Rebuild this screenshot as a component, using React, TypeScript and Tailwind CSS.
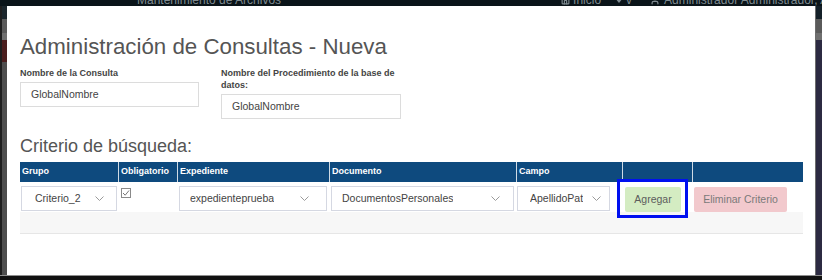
import { Home, User } from 'lucide-react';

const font = "font-['Liberation_Sans',Arial,Helvetica,sans-serif]";

function Chevron() {
  return (
    <svg width="9" height="5" viewBox="0 0 9 5" className="shrink-0">
      <path d="M0.5 0.5 L4.5 4.5 L8.5 0.5" fill="none" stroke="#9a9a9a" strokeWidth="1" />
    </svg>
  );
}

function Select({ value, width, pl, pr }: { value: string; width: string; pl: string; pr: string }) {
  return (
    <div className={`${width} ${pl} ${pr} h-[25px] border border-[#d5d8e2] bg-white flex items-center justify-between`}>
      <span className="text-[10.5px] text-[#444] whitespace-nowrap overflow-hidden">{value}</span>
      <Chevron />
    </div>
  );
}

// strip of the page behind the modal, only the lower edge of its text shows
function TopBar() {
  return (
    <div className="h-[6px] flex items-start overflow-hidden text-[12px] leading-[14px] text-[#7f8a90]">
      <span className="ml-[137px] mt-[-7px] whitespace-nowrap">Mantenimiento de Archivos</span>
      <span className="ml-[280px] mt-[-7px] flex items-center gap-[3px] whitespace-nowrap">
        <Home size={9} strokeWidth={3} /> Inicio
      </span>
      <span className="ml-[14px] mt-[-7px] flex items-center gap-[3px] whitespace-nowrap">
        <svg width="8" height="8" viewBox="0 0 8 8"><path d="M0 2 H8 L4 7 Z" fill="#7f8a90" /></svg> v
      </span>
      <span className="ml-[18px] mt-[-7px] flex items-center gap-[4px] whitespace-nowrap">
        <User size={10} strokeWidth={3} /> Administrador Administrador, Administrador
      </span>
    </div>
  );
}

function LeftStrip() {
  return (
    <div className="w-[7px] flex flex-col border-l-2 border-[#1e1e1e]">
      <div className="h-[13px] bg-[#1b262c]" />
      <div className="h-[14px] bg-[#5a5a5a]" />
      <div className="h-[7px] bg-[#6f6f6f]" />
      <div className="h-[22px] bg-[#4b1e1e]" />
      <div className="flex-1 bg-[#4e4e4e]" />
    </div>
  );
}

function RightStrip() {
  return (
    <div className="w-[7px] flex flex-col border-l border-[#6c6c6c]">
      <div className="h-[13px] bg-[#142028]" />
      <div className="h-[14px] bg-[#5a5a5a]" />
      <div className="h-[7px] bg-[#6f6f6f]" />
      <div className="flex-1 bg-[#2c2a42]" />
    </div>
  );
}

export default function App() {
  const headers = ['Grupo', 'Obligatorio', 'Expediente', 'Documento', 'Campo', '', ''];
  return (
    <div className={`w-[822px] h-[280px] bg-[#0a1419] flex flex-col overflow-hidden ${font}`}>
      <TopBar />
      <div className="flex h-[269px]">
        <LeftStrip />
        <main className="w-[808px] bg-white pl-[13px] pr-[12px] pt-[28px]">
          <h1 className="text-[22.3px] leading-[26px] text-[#555]">Administración de Consultas - Nueva</h1>

          <div className="mt-[7px] flex gap-[22px] items-start">
            <div className="w-[179px]">
              <label className="block text-[9px] leading-[12px] font-bold text-[#444]">Nombre de la Consulta</label>
              <div className="mt-[3px] h-[25px] border border-[#dcdcdc] pl-[10px] flex items-center text-[10.5px] text-[#444]">
                GlobalNombre
              </div>
            </div>
            <div className="w-[180px]">
              <label className="block text-[9px] leading-[12px] font-bold text-[#444]">
                Nombre del Procedimiento de la base de datos:
              </label>
              <div className="mt-[3px] h-[25px] border border-[#dcdcdc] pl-[10px] flex items-center text-[10.5px] text-[#444]">
                GlobalNombre
              </div>
            </div>
          </div>

          <h2 className="mt-[16px] text-[18px] leading-[22px] text-[#555]">Criterio de búsqueda:</h2>

          <div className="mt-[5px] w-[783px]">
            <div className="grid grid-cols-[98px_59px_152px_187px_106px_70px_111px] h-[20px] bg-[#0e4a7e]">
              {headers.map((h, i) => (
                <div
                  key={i}
                  className={`pl-[2px] flex items-center text-[9px] font-bold text-white ${i > 0 ? 'border-l border-white/80' : ''}`}
                >
                  {h}
                </div>
              ))}
            </div>

            <div className="grid grid-cols-[98px_59px_152px_187px_106px_70px_111px] h-[30px] bg-white pt-[4px]">
              <div className="pl-[1px]">
                <Select value="Criterio_2" width="w-[96px]" pl="pl-[13px]" pr="pr-[12px]" />
              </div>
              <div className="pl-[3px] pt-[2px]">
                <div className="w-[10px] h-[10px] border border-[#8a8a8a] bg-white flex items-center justify-center">
                  <svg width="8" height="8" viewBox="0 0 8 8">
                    <path d="M1 4 L3.2 6.2 L7 1.5" fill="none" stroke="#777" strokeWidth="1" />
                  </svg>
                </div>
              </div>
              <div className="pl-[2px]">
                <Select value="expedienteprueba" width="w-[148px]" pl="pl-[10px]" pr="pr-[17px]" />
              </div>
              <div className="pl-[2px]">
                <Select value="DocumentosPersonales" width="w-[183px]" pl="pl-[10px]" pr="pr-[13px]" />
              </div>
              <div className="pl-[1px]">
                <Select value="ApellidoPat" width="w-[93px]" pl="pl-[12px]" pr="pr-[8px]" />
              </div>
              <div className="pl-[3px]">
                <div className="relative w-[56px]">
                  <button className="w-[56px] h-[25px] rounded-[2px] bg-[#d4ecc2] text-[10.5px] text-[#5c5c5c]">
                    Agregar
                  </button>
                  <div className="absolute left-[-8px] top-[-7px] w-[71px] h-[39px] border-[3px] border-[#0010f0]" />
                </div>
              </div>
              <div className="pl-[2px]">
                <button className="w-[93px] h-[25px] rounded-[2px] bg-[#f2c9cd] text-[10.5px] text-[#7a7a7a]">
                  Eliminar Criterio
                </button>
              </div>
            </div>

            <div className="h-[22px] bg-[#f7f7f7] border-b border-[#e6e6e6]" />
          </div>
        </main>
        <RightStrip />
      </div>
      <div className="h-[5px] border-t border-[#8e8e8e] bg-[#111]" />
    </div>
  );
}
